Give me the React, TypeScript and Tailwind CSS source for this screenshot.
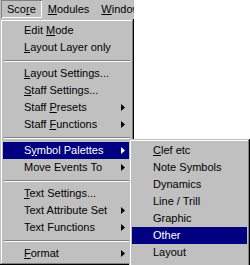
import React from "react";

type Item =
  | { sep: true }
  | { label: string; key?: number; sub?: boolean; active?: boolean; sep?: false };

const mainItems: Item[] = [
  { label: "Edit Mode", key: 5 },
  { label: "Layout Layer only", key: 0 },
  { sep: true },
  { label: "Layout Settings...", key: 0 },
  { label: "Staff Settings...", key: 0 },
  { label: "Staff Presets", key: 6, sub: true },
  { label: "Staff Functions", key: 6, sub: true },
  { sep: true },
  { label: "Symbol Palettes", key: 1, sub: true, active: true },
  { label: "Move Events To", sub: true },
  { sep: true },
  { label: "Text Settings...", key: 0 },
  { label: "Text Attribute Set", sub: true },
  { label: "Text Functions", sub: true },
  { sep: true },
  { label: "Format", key: 0, sub: true },
];

const subItems: Item[] = [
  { label: "Clef etc", key: 0 },
  { label: "Note Symbols" },
  { label: "Dynamics" },
  { label: "Line / Trill" },
  { label: "Graphic" },
  { label: "Other", active: true },
  { label: "Layout" },
  { label: "Global Symbols" },
];

// win98 style 3d edge
const raised =
  "shadow-[inset_-1px_-1px_0_#000,inset_1px_1px_0_#c0c0c0,inset_-2px_-2px_0_#808080,inset_2px_2px_0_#fff]";

function Label({ text, k }: { text: string; k?: number }) {
  if (k === undefined) return <span>{text}</span>;
  return (
    <span>
      {text.slice(0, k)}
      <span className="underline underline-offset-[1px]">{text[k]}</span>
      {text.slice(k + 1)}
    </span>
  );
}

function Arrow() {
  return (
    <svg width="4" height="7" viewBox="0 0 4 7" className="fill-current">
      <path d="M0 0 L4 3.5 L0 7 Z" />
    </svg>
  );
}

function MenuList({ items }: { items: Item[] }) {
  return (
    <div className="flex flex-col">
      {items.map((it, i) =>
        it.sep ? (
          <div key={i} className="h-[9px] flex flex-col justify-center px-[1px]">
            <div className="h-px bg-[#808080]" />
            <div className="h-px bg-white" />
          </div>
        ) : (
          <div
            key={i}
            className={`h-[17px] flex items-center pl-[21px] pr-[6px] whitespace-nowrap ${
              it.active ? "bg-[#000080] text-white" : "text-black"
            }`}
          >
            <div className="flex-1">
              <Label text={it.label} k={it.key} />
            </div>
            {it.sub && <Arrow />}
          </div>
        )
      )}
    </div>
  );
}

export default function App() {
  return (
    <div
      className="relative w-[250px] h-[265px] bg-white overflow-hidden text-[11px] leading-none"
      style={{ fontFamily: '"Liberation Sans", Arial, sans-serif' }}
    >
      <div className="w-[134px] h-[19px] bg-[#c0c0c0] flex items-start pl-[1px] overflow-hidden whitespace-nowrap">
        <div className="h-[18px] px-[6px] flex items-center shadow-[inset_1px_1px_0_#808080,inset_-1px_-1px_0_#fff]">
          <Label text="Score" k={3} />
        </div>
        <div className="h-[18px] px-[6px] flex items-center">
          <Label text="Modules" k={0} />
        </div>
        <div className="h-[18px] px-[6px] flex items-center">
          <Label text="Windows" k={0} />
        </div>
      </div>

      <div className={`absolute left-0 top-[19px] w-[134px] bg-[#c0c0c0] p-[3px] ${raised}`}>
        <MenuList items={mainItems} />
      </div>

      <div className={`absolute left-[129px] top-[139px] w-[121px] bg-[#c0c0c0] p-[3px] ${raised}`}>
        <MenuList items={subItems} />
      </div>
    </div>
  );
}
